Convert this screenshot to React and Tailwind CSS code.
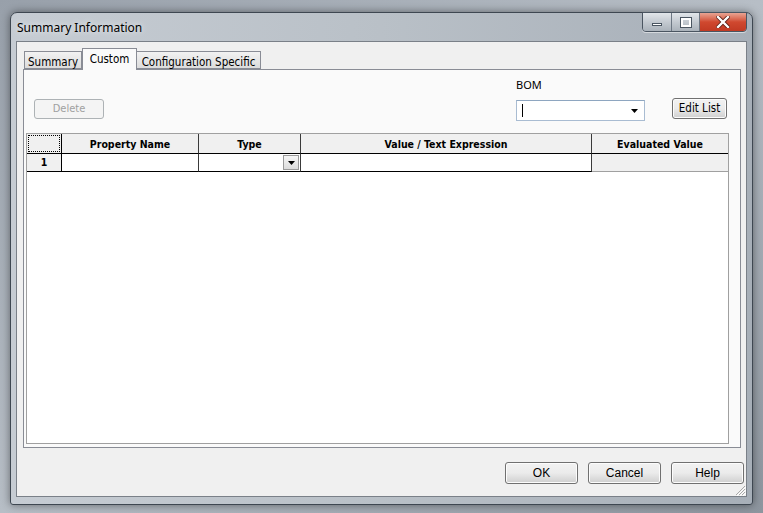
import React from "react";

const tahoma = "font-['DejaVu_Sans_Condensed','DejaVu_Sans',sans-serif] [font-stretch:condensed]";

const Tab = ({ label, active, w }) => (
  <div
    className={
      active
        ? `relative z-10 -mb-px ${w} h-[22px] pt-[2px] text-center bg-[#fafafa] border border-b-0 border-[#898c95] text-[11.5px] text-black`
        : `${w} h-[18px] pt-[2px] text-center bg-gradient-to-b from-[#f2f2f2] to-[#dcdcdc] border border-[#898c95] text-[11.5px] text-black`
    }
  >
    {label}
  </div>
);

const WinButton = ({ children, className = "" }) => (
  <button
    className={
      "w-[73px] h-[22px] rounded-[3px] border border-[#707070] bg-gradient-to-b from-[#f2f2f2] via-[#ebebeb] to-[#cfcfcf] text-[12px] text-black font-['Liberation_Sans',Arial,sans-serif] shadow-[inset_0_0_0_1px_#fcfcfc] " +
      className
    }
  >
    {children}
  </button>
);

const HeadCell = ({ w, children, last }) => (
  <div
    className={`${w} h-full flex items-center justify-center pt-[2px] border-b border-black ${
      last ? "" : "border-r border-r-[#3a3a3a]"
    } bg-[#f0f0f0] text-[10.5px] font-bold text-black`}
  >
    {children}
  </div>
);

export default function App() {
  return (
    <div className="w-[763px] h-[513px] overflow-hidden bg-gradient-to-br from-[#98a0aa] via-[#b7bec6] to-[#8d959e] pt-[12px] pl-[10px]">
      {/* window */}
      <div className="w-[743px] h-[493px] rounded-t-[7px] rounded-b-[3px] border border-[#3e4751] bg-gradient-to-r from-[#c6ccd3] via-[#b9c0c7] to-[#a7afb8] shadow-[0_0_8px_rgba(0,0,0,0.45)] flex flex-col">
        {/* title bar */}
        <div className="h-[28px] flex items-start justify-between">
          <div className="pl-[6px] pt-[6px] text-[12px] text-black font-['Noto_Sans',sans-serif] [text-shadow:0_0_6px_rgba(255,255,255,0.9)]">
            Summary Information
          </div>
          <div className="mr-[5px] -mt-px flex h-[20px] rounded-b-[4px] border border-[#4a5561] overflow-hidden shadow-[0_1px_0_rgba(255,255,255,0.5)]">
            <div className="w-[29px] h-full bg-gradient-to-b from-[#e2e6ea] via-[#c4cad1] to-[#aab2ba] border-r border-[#6d7783] flex items-end justify-center pb-[5px]">
              <div className="w-[10px] h-[3px] bg-white border border-[#4a5561]" />
            </div>
            <div className="w-[28px] h-full bg-gradient-to-b from-[#e2e6ea] via-[#c4cad1] to-[#aab2ba] border-r border-[#6d7783] flex items-center justify-center">
              <div className="w-[10px] h-[9px] border-[2px] border-white outline outline-1 outline-[#4a5561] bg-transparent" />
            </div>
            <div className="w-[46px] h-full bg-gradient-to-b from-[#e8a493] via-[#d0482f] to-[#c13a23] flex items-center justify-center">
              <svg width="14" height="12" viewBox="0 0 14 12">
                <path d="M2 1 L12 11 M12 1 L2 11" stroke="#5a1d14" strokeWidth="4" strokeLinecap="square" />
                <path d="M2 1 L12 11 M12 1 L2 11" stroke="#ffffff" strokeWidth="2.4" strokeLinecap="square" />
              </svg>
            </div>
          </div>
        </div>

        {/* client area */}
        <div className={`mx-[5px] mb-[7px] flex-1 border border-[#7a8088] bg-[#f0f0f0] flex flex-col ${tahoma}`}>
          {/* tabs */}
          <div className="flex items-end pl-[7px] pt-[6px]">
            <Tab label="Summary" w="w-[58px]" />
            <Tab label="Custom" w="w-[55px]" active />
            <div className="w-[124px] h-[18px] pt-[2px] text-center bg-gradient-to-b from-[#f2f2f2] to-[#dcdcdc] border border-l-0 border-[#898c95] text-[11.5px] text-black">
              Configuration Specific
            </div>
          </div>

          {/* tab panel */}
          <div className="ml-[6px] w-[718px] h-[379px] border border-[#898c95] bg-[#fafafa] flex flex-col">
            <div className="h-[63px] flex pl-[10px]">
              <button className="mt-[29px] w-[70px] h-[20px] rounded-[3px] border border-[#adb2b5] bg-[#f4f4f4] text-[11px] text-[#a0a0a0]">
                Delete
              </button>
              <div className="ml-[412px] flex flex-col">
                <div className="mt-[7px] h-[23px] text-[11px] text-black font-['Noto_Sans',sans-serif]">BOM</div>
                <div className="w-[129px] h-[21px] border border-[#a9bcd2] border-t-[#8ea6c0] bg-white flex items-center pl-[5px] pr-[6px] justify-between">
                  <div className="w-px h-[13px] bg-black" />
                  <svg width="7" height="4" viewBox="0 0 7 4">
                    <path d="M0 0 H7 L3.5 4 Z" fill="#000" />
                  </svg>
                </div>
              </div>
              <WinButton className="ml-[27px] mt-[28px] !w-[55px] !h-[21px] !text-[11.5px] !font-['DejaVu_Sans_Condensed','DejaVu_Sans',sans-serif]">
                Edit List
              </WinButton>
            </div>

            {/* grid */}
            <div className="ml-[2px] w-[703px] h-[311px] border border-[#a0a0a0] bg-white flex flex-col">
              <div className="flex h-[20px]">
                <div className="w-[35px] h-full border-b border-r border-black bg-[#f0f0f0] p-px">
                  <div className="w-full h-full border border-dotted border-black" />
                </div>
                <HeadCell w="w-[137px]">Property Name</HeadCell>
                <HeadCell w="w-[102px]">Type</HeadCell>
                <HeadCell w="w-[291px]">Value / Text Expression</HeadCell>
                <HeadCell w="w-[136px]" last>Evaluated Value</HeadCell>
              </div>
              <div className="flex h-[18px]">
                <div className="w-[35px] h-full border-b border-r border-black bg-[#f0f0f0] flex items-center justify-center pt-px text-[10.5px] font-bold text-black">
                  1
                </div>
                <div className="w-[137px] h-full border-b border-r border-[#3a3a3a] border-b-black bg-white" />
                <div className="w-[102px] h-full border-b border-r border-[#3a3a3a] border-b-black bg-white flex items-center justify-end pr-px">
                  <div className="w-[16px] h-[15px] border border-[#9a9a9a] bg-gradient-to-b from-[#f6f6f6] to-[#dcdcdc] flex items-center justify-center">
                    <svg width="7" height="4" viewBox="0 0 7 4">
                      <path d="M0 0 H7 L3.5 4 Z" fill="#000" />
                    </svg>
                  </div>
                </div>
                <div className="w-[291px] h-full border-b border-r border-[#3a3a3a] border-b-black bg-white" />
                <div className="w-[136px] h-full border-b border-[#a0a0a0] bg-[#f0f0f0]" />
              </div>
            </div>
          </div>

          {/* bottom buttons */}
          <div className="flex-1 flex items-start justify-end pt-[14px] pr-[2px] gap-[10px] relative">
            <WinButton>OK</WinButton>
            <WinButton>Cancel</WinButton>
            <WinButton>Help</WinButton>
            <svg className="absolute right-0 bottom-0" width="12" height="12" viewBox="0 0 12 12">
              <path d="M11 2 L2 11 M11 5 L5 11 M11 8 L8 11" stroke="#a8a8a8" strokeWidth="1" />
              <path d="M12 3 L3 12 M12 6 L6 12 M12 9 L9 12" stroke="#ffffff" strokeWidth="1" />
            </svg>
          </div>
        </div>
      </div>
    </div>
  );
}
